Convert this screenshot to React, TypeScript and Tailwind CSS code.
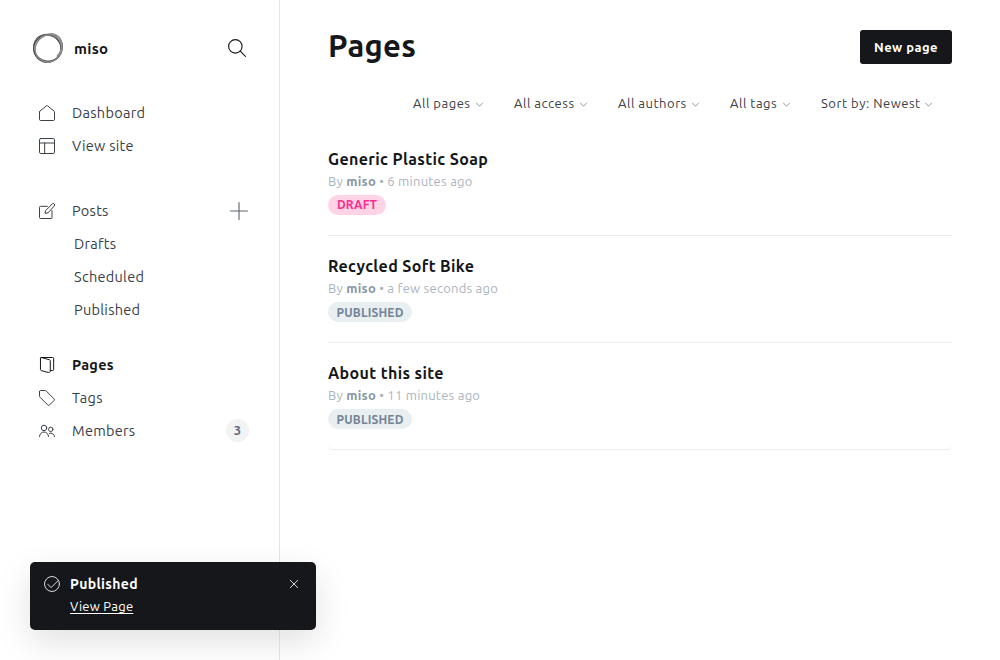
import type { ReactNode } from 'react';

function Icon({ children, className = 'size-4' }: { children: ReactNode; className?: string }) {
  return (
    <svg
      viewBox="0 0 24 24"
      fill="none"
      stroke="currentColor"
      strokeWidth="1.5"
      strokeLinecap="round"
      strokeLinejoin="round"
      className={`shrink-0 ${className}`}
    >
      {children}
    </svg>
  );
}

const icons = {
  home: <path d="M.75 10.5v11.2c0 .85.7 1.55 1.5 1.55h19.5c.85 0 1.5-.7 1.5-1.55V10.5c0-.6-.25-1.1-.7-1.4L12.9 1.2a1.5 1.5 0 0 0-1.8 0L1.45 9.1c-.45.3-.7.8-.7 1.4z" />,
  layout: (
    <>
      <rect x=".75" y=".75" width="22.5" height="22.5" rx="2" />
      <path d="M.75 7.5h22.5M8.5 7.5v15.75" />
    </>
  ),
  write: (
    <>
      <path d="M12.5 5H2.25a1.5 1.5 0 0 0-1.5 1.5v15.25a1.5 1.5 0 0 0 1.5 1.5H18a1.5 1.5 0 0 0 1.5-1.5V11.5" />
      <path d="m13.2 14.8-4.2.8.8-4.2L19.9 1.4a2.1 2.1 0 0 1 3 3z" />
    </>
  ),
  pages: (
    <>
      <path d="M3.5.75h17a1.5 1.5 0 0 1 1.5 1.5v16.5a1.5 1.5 0 0 1-1.5 1.5H17.5" />
      <path d="M2.2 1.8v17.1c0 .7.5 1.3 1.1 1.5l10.7 2.8c1 .3 2.9-.4 2.9-1.4V5.6c0-.7-.5-1.3-1.2-1.5L3.5.8c-.8-.1-1.3.3-1.3 1z" />
    </>
  ),
  tag: <path d="M.75 2.25v6.6c0 .8.3 1.5.9 2.1l11.8 11.8a1.5 1.5 0 0 0 2.1 0l7.2-7.2a1.5 1.5 0 0 0 0-2.1L10.95 1.65c-.6-.6-1.3-.9-2.1-.9h-6.6a1.5 1.5 0 0 0-1.5 1.5z" />,
  members: (
    <>
      <circle cx="7.5" cy="7.4" r="4.1" />
      <path d="M.75 20.25a6.75 6.75 0 0 1 13.5 0" />
      <circle cx="17.7" cy="9.5" r="3.3" />
      <path d="M15.6 15.4a5.6 5.6 0 0 1 7.65 4.85" />
    </>
  ),
};

function NavItem({ icon, label, active, children }: { icon: ReactNode; label: ReactNode; active?: boolean; children?: ReactNode }) {
  return (
    <a className={`flex h-[33px] items-center pl-[39px] pr-[30px] ${active ? 'font-bold text-[#15171a]' : 'text-[#394047]'}`}>
      <Icon>{icon}</Icon>
      <span className="ml-[17px] flex-1">{label}</span>
      {children}
    </a>
  );
}

function Filter({ label, className = '' }: { label: string; className?: string }) {
  return (
    <div className={`flex items-center justify-between whitespace-nowrap ${className}`}>
      <span className="tracking-[0.52px]">{label}</span>
      <Icon className="h-[7px] w-[7px] text-[#7c8b9a]">
        <path d="M1 6.5 12 18 23 6.5" strokeWidth="3" />
      </Icon>
    </div>
  );
}

function Row({ title, time, draft, last }: { title: string; time: string; draft?: boolean; last?: boolean }) {
  return (
    <li className={`h-[107px] border-b border-[#e9ebed] pt-[19px] ${last ? 'rounded-[5px]' : ''}`}>
      <h3 className="text-base leading-[22px] font-bold tracking-[0.36px] whitespace-nowrap text-[#15171a]">{title}</h3>
      <p className="mt-px text-[13px] leading-[20px] tracking-[0.24px] whitespace-nowrap text-[#abb4be]">
        By <span className="font-semibold text-[#8796a5]">miso</span> • {time}
      </p>
      <span
        className={`mt-[4px] flex h-5 items-center justify-center rounded-full text-[12px] font-semibold ${
          draft ? 'w-[58px] bg-[#ffd3e6] pb-px tracking-[0.1px] text-[#fb2d8d]' : 'w-[84px] bg-[#e9eef1] pt-px tracking-[0.18px] text-[#738496]'
        }`}
      >
        {draft ? 'DRAFT' : 'PUBLISHED'}
      </span>
    </li>
  );
}

export default function App() {
  return (
    <div className="flex h-[660px] w-[1000px] overflow-hidden bg-white font-['Ubuntu','Noto_Sans',sans-serif] text-[#15171a]">
      <aside className="w-[280px] shrink-0 border-r border-[#e5e7e9] text-[14.5px] tracking-[0.28px]">
        <header className="flex h-[96px] items-center pl-8 pr-[33px]">
          <svg viewBox="0 0 32 32" fill="none" className="size-8">
            <ellipse cx="15.3" cy="16.6" rx="13.6" ry="13.5" stroke="#444" strokeWidth="1.4" />
            <ellipse cx="16.8" cy="16" rx="14.3" ry="12.7" transform="rotate(-42 16.8 16)" stroke="#777" strokeWidth="1.3" />
            <ellipse cx="15.8" cy="15.8" rx="14.4" ry="13.1" transform="rotate(28 15.8 15.8)" stroke="#555" strokeWidth="1" />
            <ellipse cx="16.4" cy="16.4" rx="13.4" ry="13.9" transform="rotate(40 16.4 16.4)" stroke="#999" strokeWidth=".8" />
            <path d="M16 2.3c6-1.8 12.5 1.8 13.4 8.5M27.4 8c3.6 5.2 2.8 11.8-2.5 16.5" stroke="#8b8b8b" strokeWidth="1.6" />
          </svg>
          <span className="ml-[10px] flex-1 pt-[2px] text-[15px] font-bold tracking-[0.3px]">miso</span>
          <Icon className="size-[18px]">
            <circle cx="9.8" cy="9.8" r="9" />
            <path d="m16.3 16.3 7 7" />
          </Icon>
        </header>
        <nav>
          <NavItem icon={icons.home} label="Dashboard" />
          <NavItem icon={icons.layout} label="View site" />
          <div className="mt-[32px]">
            <NavItem icon={icons.write} label="Posts">
              <Icon className="mr-px size-[18px] text-[#5d6570]">
                <path d="M12 .75v22.5M.75 12h22.5" />
              </Icon>
            </NavItem>
            <div className="flex flex-col pl-[74px] leading-[33px] text-[#394047]">
              <a>Drafts</a>
              <a>Scheduled</a>
              <a>Published</a>
            </div>
          </div>
          <div className="mt-[22px]">
            <NavItem icon={icons.pages} label="Pages" active />
            <NavItem icon={icons.tag} label="Tags" />
            <NavItem icon={icons.members} label="Members">
              <span className="flex size-[23px] items-center justify-center rounded-full bg-[#f1f3f5] text-[13px] font-semibold tracking-normal text-[#626d79]">3</span>
            </NavItem>
          </div>
        </nav>
      </aside>

      <main className="flex-1 px-12">
        <header className="flex h-[94px] items-start justify-between pt-[30px]">
          <h1 className="text-[31px] leading-[32px] font-bold tracking-[0.3px]">Pages</h1>
          <button className="h-[34px] w-[92px] rounded-[3px] bg-[#15171a] pt-px text-[13px] font-semibold tracking-[0.42px] whitespace-nowrap text-white">New page</button>
        </header>
        <div className="flex h-5 justify-end gap-[31px] pr-5 text-[13px] text-[#394047]">
          <Filter label="All pages" className="w-[70px]" />
          <Filter label="All access" className="w-[73px]" />
          <Filter label="All authors" className="w-[81px]" />
          <Filter label="All tags" className="w-[60px]" />
          <Filter label="Sort by: Newest" className="w-[111px]" />
        </div>
        <ul className="mt-[15px]">
          <Row title="Generic Plastic Soap" time="6 minutes ago" draft />
          <Row title="Recycled Soft Bike" time="a few seconds ago" />
          <Row title="About this site" time="11 minutes ago" last />
        </ul>
      </main>

      <div className="absolute top-[562px] left-[30px] flex h-[68px] w-[286px] rounded-[5px] bg-[#15171a] px-[14px] pt-[11px] text-white shadow-[0_12px_35px_rgba(0,0,0,0.12)]">
        <Icon className="mt-[3px] size-4 text-[#d8dbde]">
          <circle cx="12" cy="12" r="11.2" />
          <path d="m6 12.7 3.9 4.2c.5.5 1 .5 1.4-.1L21.5 6.6" />
        </Icon>
        <div className="ml-[10px] flex flex-1 flex-col">
          <span className="text-[14px] leading-[22px] font-bold tracking-[0.35px]">Published</span>
          <a className="self-start text-[13px] leading-[23px] tracking-[0.25px] underline underline-offset-2">View Page</a>
        </div>
        <Icon className="mt-[7px] mr-[4px] h-[8px] w-[8px]">
          <path d="m1 1 22 22M23 1 1 23" strokeWidth="2.5" />
        </Icon>
      </div>
    </div>
  );
}
